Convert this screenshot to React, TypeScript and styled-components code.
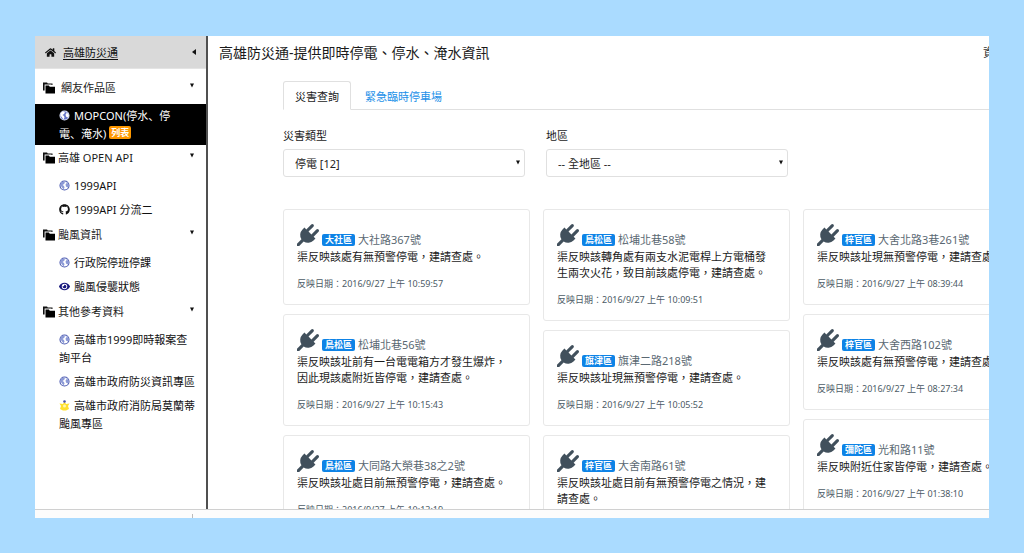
import React, { useState } from 'react';
import styled, { createGlobalStyle } from 'styled-components';
import { FaEye, FaGithub, FaHome } from 'react-icons/fa';

const GlobalStyle = createGlobalStyle`
  *, *::before, *::after { box-sizing: border-box; }
  body { margin: 0; background: #aadbff; }
  button, select, input { font: inherit; color: inherit; }
`;

const Backdrop = styled.div`
  height: 100vh;
  padding: 36px 35px 35px;
  background: #aadbff;
  font-family: 'Noto Sans', 'Noto Sans CJK TC', sans-serif;
  font-size: 11px;
  line-height: 16px;
  color: #1a1a1a;
`;

const Frame = styled.div`
  display: flex;
  flex-direction: column;
  height: 100%;
  overflow: hidden;
  background: #fff;
`;

const Body = styled.div`
  display: flex;
  flex: 1;
  min-height: 0;
`;

const StatusStrip = styled.footer`
  flex: none;
  height: 9px;
  padding: 4px 0 0 157px;
  border-top: 1px solid #d0d0d0;
  background: #fcfcfc;
`;

const StripMark = styled.div`
  width: 1px;
  height: 4px;
  background: #bbb;
`;

/* Sidebar */

const Sidebar = styled.nav`
  flex: none;
  width: 173px;
  border-right: 2px solid #505050;
  font-family: 'Noto Sans', 'Noto Sans CJK SC', sans-serif;
  line-height: 18px;
`;

const SidebarHeader = styled.div`
  display: flex;
  align-items: center;
  height: 33px;
  margin-bottom: 7px;
  padding: 0 10px;
  border-bottom: 1px solid #e4e4e4;
  background: #d9d9d9;
`;

const HomeLink = styled.a`
  display: flex;
  flex: 1;
  align-items: center;
  gap: 7px;
  padding-top: 1px;
  color: #111;
  text-underline-offset: 2px;
`;

const PlainButton = styled.button`
  display: flex;
  padding: 0;
  border: 0;
  background: none;
  cursor: pointer;
`;

const GroupButton = styled(PlainButton)<{ $wide?: boolean }>`
  align-items: center;
  gap: ${(p) => (p.$wide ? 6 : 3)}px;
  width: 100%;
  height: 24px;
  padding: 0 12px 0 8px;
  text-align: left;
`;

const GroupLabel = styled.span`
  flex: 1;
`;

const CaretSlot = styled.span`
  display: flex;
  padding-bottom: 6px;
`;

const ItemList = styled.ul`
  margin: 0;
  padding: 4px 0 1px;
  list-style: none;
`;

const Item = styled.a<{ $active?: boolean }>`
  display: block;
  padding: ${(p) => (p.$active ? '3px 6px 2px 24px' : '3px 6px 3px 24px')};
  color: ${(p) => (p.$active ? '#fff' : '#111')};
  background: ${(p) => (p.$active ? '#000' : 'transparent')};
  text-decoration: none;
  white-space: nowrap;
  svg {
    margin-right: 4px;
    vertical-align: -1px;
  }
`;

const ListBadge = styled.span`
  display: inline-block;
  padding: 0 2px;
  border-radius: 2px;
  background: #ff9800;
  color: #fff;
  font-size: 9px;
  font-weight: 700;
  line-height: 13px;
  vertical-align: 2px;
`;

/* Main */

const Main = styled.main`
  flex: 1;
  min-width: 0;
  overflow: hidden;
`;

const Page = styled.div`
  min-width: 842px;
`;

const TopBar = styled.header`
  display: flex;
  align-items: center;
  justify-content: space-between;
  height: 34px;
  padding: 0 55px 0 11px;
`;

const Title = styled.h1`
  margin: 0;
  font-size: 14px;
  font-weight: 400;
  line-height: 20px;
`;

const TopLink = styled.a`
  color: #333;
  font-size: 12px;
  text-decoration: none;
`;

const Content = styled.div`
  padding: 11px 0 0 75px;
`;

const Tabs = styled.div`
  display: flex;
  gap: 2px;
  border-bottom: 1px solid #e0e0e0;
`;

const Tab = styled.button<{ $active?: boolean }>`
  height: 29px;
  margin-bottom: -1px;
  padding: 2px 11px 0;
  border: 1px solid ${(p) => (p.$active ? '#e0e0e0' : 'transparent')};
  border-bottom-color: ${(p) => (p.$active ? '#fff' : 'transparent')};
  border-radius: 3px 3px 0 0;
  background: none;
  color: ${(p) => (p.$active ? '#1a1a1a' : '#1c90e8')};
  cursor: pointer;
`;

const Filters = styled.div`
  display: grid;
  grid-template-columns: repeat(3, 242px);
  gap: 21px;
  padding: 18px 0 32px;
`;

const Field = styled.label`
  display: flex;
  flex-direction: column;
  gap: 5px;
`;

const SelectBox = styled.span`
  position: relative;
  display: block;
`;

const Select = styled.select`
  width: 100%;
  height: 28px;
  padding: 2px 20px 0 11px;
  border: 1px solid #e0e0e0;
  border-radius: 3px;
  background: #fff;
  color: #222;
  appearance: none;
`;

const SelectCaret = styled.span`
  position: absolute;
  top: 11px;
  right: 5px;
  display: flex;
  pointer-events: none;
`;

const Board = styled.div`
  display: grid;
  grid-template-columns: repeat(3, minmax(247px, 1fr));
  gap: 13px;
  align-items: start;
`;

const Column = styled.div`
  display: grid;
  gap: 9px;
`;

const Card = styled.article`
  padding: 13px;
  border: 1px solid #e8e8e8;
  border-radius: 3px;
`;

const CardHead = styled.div`
  display: flex;
  align-items: flex-end;
  gap: 3px;
  height: 26px;
  color: #5a6872;
`;

const PlugIcon = styled.svg`
  flex: none;
  width: 22px;
  height: 22px;
  margin-bottom: 3px;
  fill: #41505c;
`;

const District = styled.span`
  margin-bottom: 3px;
  padding: 0 3px;
  border-radius: 2px;
  background: #0e83e6;
  color: #fff;
  font-size: 9px;
  font-weight: 700;
  line-height: 12px;
`;

const Address = styled.span`
  line-height: 18px;
`;

const Report = styled.p`
  margin: 0 0 12px;
`;

const Stamp = styled.time`
  display: block;
  color: #4c5b66;
  font-size: 9px;
  line-height: 14px;
`;

/* Drawings */

const DownCaret = () => (
  <svg width="4" height="5" viewBox="0 0 4 5" aria-hidden="true">
    <path d="M0 .5h4L2 4.500z" fill="#111" />
  </svg>
);

const LeftCaret = () => (
  <svg width="4" height="6" viewBox="0 0 4 6" aria-hidden="true">
    <path d="M4 0v6L0 3z" fill="#111" />
  </svg>
);

const Folders = () => (
  <svg width="12" height="12" viewBox="0 0 12 12" aria-hidden="true">
    <path d="M0 .5h4l.8 1H9.500v1.500H8.500V2.600H1.600V8.500H0z" fill="#111" />
    <path d="M2.500 3.500h3.300l1 1.200H12V11.500H2.500z" fill="#000" />
  </svg>
);

const Globe = ({ active }: { active?: boolean }) => (
  <svg width="11" height="11" viewBox="0 0 22 22" aria-hidden="true">
    <circle cx="11" cy="11" r="9" fill={active ? '#6474c8' : '#fff'} stroke={active ? '#dfe6ff' : '#4a59b0'} strokeWidth="2.200" />
    <path
      d="M4 5l5-2 3 2-2 3-3 2 3 2 1 3-2 4-3-4-3-4zM13 4l5 3 2 5-3 3-3-2-1-4 2-2z"
      fill={active ? '#fff' : '#8c9ad6'}
    />
  </svg>
);

const Emblem = () => (
  <svg width="11" height="11" viewBox="0 0 22 22" aria-hidden="true">
    <path d="M11 3l3 5 7-1-3 5 2 6-6 3H8l-6-3 2-6-3-5 7 1z" fill="#ffe02e" />
    <circle cx="11" cy="12" r="3" fill="#fff6b0" />
    <circle cx="11" cy="3" r="2.600" fill="#4950a8" />
  </svg>
);

const Plug = () => (
  <PlugIcon viewBox="0 0 1792 1792" aria-hidden="true">
    <path d="M1755 453q37 38 37 90.500t-37 90.500l-401 400 150 150-160 160q-163 163-389.500 186.500t-411.500-100.500l-362 362h-181v-181l362-362q-124-185-100.500-411.500t186.500-389.500l160-160 150 150 400-401q38-37 91-37t90 37 37 90.500-37 90.500l-400 401 234 234 401-400q38-37 91-37t90 37z" />
  </PlugIcon>
);

/* Data */

type Outage = { district: string; address: string; report: string[]; time: string };

const columns: Outage[][] = [
  [
    { district: '大社區', address: '大社路367號', report: ['渠反映該處有無預警停電，建請查處。'], time: '10:59:57' },
    { district: '鳥松區', address: '松埔北巷56號', report: ['渠反映該址前有一台電電箱方才發生爆炸，', '因此現該處附近皆停電，建請查處。'], time: '10:15:43' },
    { district: '鳥松區', address: '大同路大榮巷38之2號', report: ['渠反映該址處目前無預警停電，建請查處。'], time: '10:13:19' },
  ],
  [
    { district: '鳥松區', address: '松埔北巷58號', report: ['渠反映該轉角處有兩支水泥電桿上方電桶發', '生兩次火花，致目前該處停電，建請查處。'], time: '10:09:51' },
    { district: '旗津區', address: '旗津二路218號', report: ['渠反映該址現無預警停電，建請查處。'], time: '10:05:52' },
    { district: '梓官區', address: '大舍南路61號', report: ['渠反映該址處目前有無預警停電之情況，建', '請查處。'], time: '09:48:20' },
  ],
  [
    { district: '梓官區', address: '大舍北路3巷261號', report: ['渠反映該址現無預警停電，建請查處。'], time: '08:39:44' },
    { district: '梓官區', address: '大舍西路102號', report: ['渠反映該處有無預警停電，建請查處。'], time: '08:27:34' },
    { district: '彌陀區', address: '光和路11號', report: ['渠反映附近住家皆停電，建請查處。'], time: '01:38:10' },
  ],
];

const Lines = ({ lines }: { lines: string[] }) => (
  <>
    {lines.map((line, i) => (
      <React.Fragment key={line}>
        {i > 0 && <br />}
        {line}
      </React.Fragment>
    ))}
  </>
);

const Group = ({ label, wide, children }: { label: string; wide?: boolean; children: React.ReactNode }) => {
  const [open, setOpen] = useState(true);
  return (
    <section>
      <GroupButton type="button" $wide={wide} aria-expanded={open} onClick={() => setOpen(!open)}>
        <Folders />
        <GroupLabel>{label}</GroupLabel>
        <CaretSlot>
          <DownCaret />
        </CaretSlot>
      </GroupButton>
      {open && <ItemList>{children}</ItemList>}
    </section>
  );
};

const Dropdown = ({ label, option }: { label: string; option: string }) => (
  <Field>
    {label}
    <SelectBox>
      <Select>
        <option>{option}</option>
      </Select>
      <SelectCaret>
        <DownCaret />
      </SelectCaret>
    </SelectBox>
  </Field>
);

export default function App() {
  const [tab, setTab] = useState(0);
  return (
    <Backdrop>
      <GlobalStyle />
      <Frame>
        <Body>
          <Sidebar>
            <SidebarHeader>
              <HomeLink href="#home">
                <FaHome size={11} />
                <u>高雄防災通</u>
              </HomeLink>
              <PlainButton type="button" aria-label="收合選單">
                <LeftCaret />
              </PlainButton>
            </SidebarHeader>
            <Group label="網友作品區" wide>
              <li>
                <Item href="#mopcon" $active>
                  <Globe active />
                  MOPCON(停水、停
                  <br />
                  電、淹水) <ListBadge>列表</ListBadge>
                </Item>
              </li>
            </Group>
            <Group label="高雄 OPEN API">
              <li>
                <Item href="#api1">
                  <Globe />
                  1999API
                </Item>
              </li>
              <li>
                <Item href="#api2">
                  <FaGithub size={11} />
                  1999API 分流二
                </Item>
              </li>
            </Group>
            <Group label="颱風資訊">
              <li>
                <Item href="#dgpa">
                  <Globe />
                  行政院停班停課
                </Item>
              </li>
              <li>
                <Item href="#typhoon">
                  <FaEye size={11} color="#16167c" />
                  颱風侵襲狀態
                </Item>
              </li>
            </Group>
            <Group label="其他參考資料">
              <li>
                <Item href="#report">
                  <Globe />
                  <Lines lines={['高雄市1999即時報案查', '詢平台']} />
                </Item>
              </li>
              <li>
                <Item href="#disaster">
                  <Globe />
                  高雄市政府防災資訊專區
                </Item>
              </li>
              <li>
                <Item href="#fire">
                  <Emblem />
                  <Lines lines={['高雄市政府消防局莫蘭蒂', '颱風專區']} />
                </Item>
              </li>
            </Group>
          </Sidebar>
          <Main>
            <Page>
              <TopBar>
                <Title>高雄防災通-提供即時停電、停水、淹水資訊</Title>
                <TopLink href="#source">資</TopLink>
              </TopBar>
              <Content>
                <Tabs role="tablist">
                  {['災害查詢', '緊急臨時停車場'].map((name, i) => (
                    <Tab key={name} type="button" role="tab" aria-selected={tab === i} $active={tab === i} onClick={() => setTab(i)}>
                      {name}
                    </Tab>
                  ))}
                </Tabs>
                <Filters>
                  <Dropdown label="災害類型" option="停電 [12]" />
                  <Dropdown label="地區" option="-- 全地區 --" />
                </Filters>
                <Board>
                  {columns.map((cards, i) => (
                    <Column key={i}>
                      {cards.map((card) => (
                        <Card key={card.address}>
                          <CardHead>
                            <Plug />
                            <District>{card.district}</District>
                            <Address>{card.address}</Address>
                          </CardHead>
                          <Report>
                            <Lines lines={card.report} />
                          </Report>
                          <Stamp>反映日期：2016/9/27 上午 {card.time}</Stamp>
                        </Card>
                      ))}
                    </Column>
                  ))}
                </Board>
              </Content>
            </Page>
          </Main>
        </Body>
        <StatusStrip>
          <StripMark />
        </StatusStrip>
      </Frame>
    </Backdrop>
  );
}
